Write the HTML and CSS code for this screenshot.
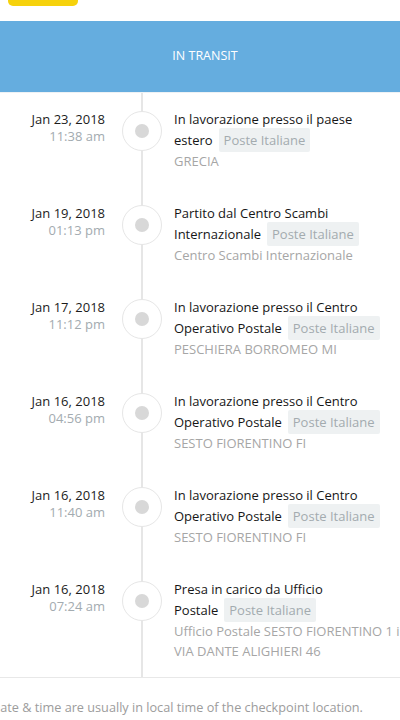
FILE: index.html
```html
<!DOCTYPE html>
<html>
	<head>
		<title>Tracking</title>
		<meta charset="utf-8"/>
		<meta name="viewport" content="width=device-width, initial-scale=1"/>
		<link rel="stylesheet" href="styles.css">
	</head>
	<body>
		<div class="top">
			<span class="top-button"></span>
		</div>
		<div class="status-bar">IN TRANSIT</div>

		<ul class="timeline">
			<li class="event">
				<div class="when">
					<div class="date">Jan 23, 2018</div>
					<div class="time">11:38 am</div>
				</div>
				<div class="marker"><span class="dot"></span></div>
				<div class="what">
					<div class="title">In lavorazione presso il paese estero<span class="courier">Poste Italiane</span></div>
					<div class="place">GRECIA</div>
				</div>
			</li>
			<li class="event">
				<div class="when">
					<div class="date">Jan 19, 2018</div>
					<div class="time">01:13 pm</div>
				</div>
				<div class="marker"><span class="dot"></span></div>
				<div class="what">
					<div class="title">Partito dal Centro Scambi Internazionale<span class="courier">Poste Italiane</span></div>
					<div class="place">Centro Scambi Internazionale</div>
				</div>
			</li>
			<li class="event">
				<div class="when">
					<div class="date">Jan 17, 2018</div>
					<div class="time">11:12 pm</div>
				</div>
				<div class="marker"><span class="dot"></span></div>
				<div class="what">
					<div class="title">In lavorazione presso il Centro Operativo Postale<span class="courier">Poste Italiane</span></div>
					<div class="place">PESCHIERA BORROMEO MI</div>
				</div>
			</li>
			<li class="event">
				<div class="when">
					<div class="date">Jan 16, 2018</div>
					<div class="time">04:56 pm</div>
				</div>
				<div class="marker"><span class="dot"></span></div>
				<div class="what">
					<div class="title">In lavorazione presso il Centro Operativo Postale<span class="courier">Poste Italiane</span></div>
					<div class="place">SESTO FIORENTINO FI</div>
				</div>
			</li>
			<li class="event">
				<div class="when">
					<div class="date">Jan 16, 2018</div>
					<div class="time">11:40 am</div>
				</div>
				<div class="marker"><span class="dot"></span></div>
				<div class="what">
					<div class="title">In lavorazione presso il Centro Operativo Postale<span class="courier">Poste Italiane</span></div>
					<div class="place">SESTO FIORENTINO FI</div>
				</div>
			</li>
			<li class="event">
				<div class="when">
					<div class="date">Jan 16, 2018</div>
					<div class="time">07:24 am</div>
				</div>
				<div class="marker"><span class="dot"></span></div>
				<div class="what">
					<div class="title">Presa in carico da Ufficio Postale<span class="courier">Poste Italiane</span></div>
					<div class="place">Ufficio Postale SESTO FIORENTINO 1 in<br>VIA DANTE ALIGHIERI 46</div>
				</div>
			</li>
		</ul>

		<div class="note">
			<p>Date &amp; time are usually in local time of the checkpoint location.</p>
		</div>
	</body>
</html>
```

FILE: styles.css
```css
body {
	font-family: 'Open Sans', 'Noto Sans', sans-serif;
	font-size: 13px;
	color: #333;
	background: #fff;
	margin: 0;
	padding: 0;
	overflow: hidden;
}

.top {
	height: 21px;
}

.top-button {
	display: block;
	width: 70px;
	height: 6px;
	margin-left: 8px;
	background-color: #f6d20c;
	border-radius: 0 0 5px 5px;
}

.status-bar {
	height: 71px;
	line-height: 69px;
	padding-left: 10px;
	text-align: center;
	font-size: 12.5px;
	color: #fff;
	background-color: #65addf;
	border-bottom: 1px solid #eef2f5;
}

.timeline {
	list-style: none;
	margin: 0;
	padding: 0;
}

.event {
	display: flex;
}

.when {
	flex-shrink: 0;
	width: 105px;
	padding-top: 18px;
	text-align: right;
	line-height: 17px;
}

.date {
	color: #1c1c1c;
}

.time {
	color: #a3abb0;
}

.marker {
	flex-shrink: 0;
	width: 40px;
	margin: 0 12px 0 17px;
	padding-top: 18px;
	/* the vertical line runs through every row */
	background: linear-gradient(#e6e6e6, #e6e6e6) no-repeat center / 2px 100%;
}

.dot {
	display: flex;
	width: 38px;
	height: 38px;
	border: 1px solid #e6e6e6;
	border-radius: 50%;
	background-color: #fff;
	align-items: center;
	justify-content: center;
}

.dot::after {
	content: "";
	width: 14px;
	height: 14px;
	border-radius: 50%;
	background-color: #d8d8d8;
}

.what {
	flex-shrink: 0;
	padding: 16px 0;
}

.title {
	width: 196px;
	line-height: 21px;
	color: #161616;
}

/* badge may run past the column edge, like the original */
.courier {
	margin: 0 -110px 0 6px;
	padding: 3px 5px;
	white-space: nowrap;
	color: #a3abaf;
	background-color: #eef1f2;
	border-radius: 2px;
}

.place {
	line-height: 20px;
	color: #a6a6a6;
	white-space: nowrap;
}

.note {
	border-top: 1px solid #e8e8e8;
	padding-top: 19px;
}

.note p {
	margin: 0 0 0 -9px;
	font-size: 12.7px;
	line-height: 20px;
	color: #9c9c9c;
	white-space: nowrap;
}
```
